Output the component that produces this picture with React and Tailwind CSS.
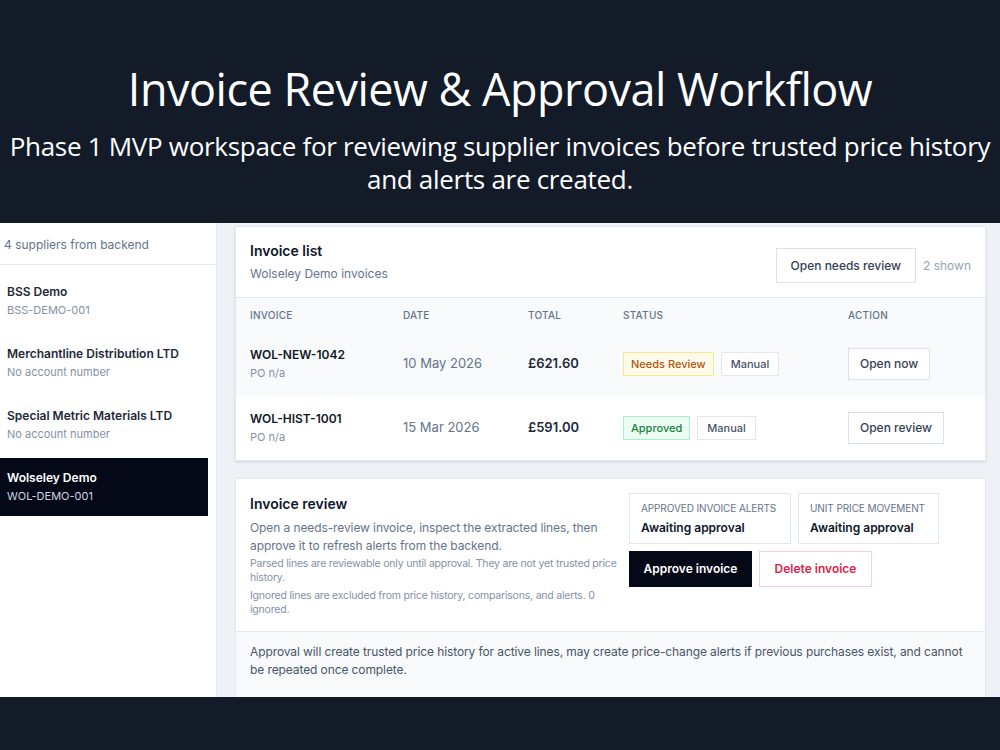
import React from 'react';

const suppliers = [
  { name: 'BSS Demo', account: 'BSS-DEMO-001' },
  { name: 'Merchantline Distribution LTD', account: 'No account number' },
  { name: 'Special Metric Materials LTD', account: 'No account number' },
  { name: 'Wolseley Demo', account: 'WOL-DEMO-001', active: true },
];

const invoices = [
  {
    id: 'WOL-NEW-1042',
    date: '10 May 2026',
    total: '£621.60',
    status: 'Needs Review',
    action: 'Open now',
    highlight: true,
  },
  {
    id: 'WOL-HIST-1001',
    date: '15 Mar 2026',
    total: '£591.00',
    status: 'Approved',
    action: 'Open review',
  },
];

const StatusBadge = ({ status }) =>
  status === 'Approved' ? (
    <span className="border border-[#a7f0c8] bg-[#ecfdf3] px-[7px] py-[3px] text-[11px] font-medium text-[#15803d]">
      Approved
    </span>
  ) : (
    <span className="border border-[#fde68a] bg-[#fffbeb] px-[7px] py-[3px] text-[11px] font-medium text-[#b45309]">
      Needs Review
    </span>
  );

const Sidebar = () => (
  <aside className="w-[217px] shrink-0 border-r border-[#e2e8f0] bg-white">
    <div className="border-b border-[#e2e8f0] px-[4px] pb-[10px] pt-[13px] text-[12px] text-[#64748b]">
      4 suppliers from backend
    </div>
    <div className="flex flex-col gap-[4px] pr-[8px] pt-[7px]">
      {suppliers.map((s) => (
        <div
          key={s.name}
          className={`h-[58px] pl-[7px] pt-[12px] ${s.active ? 'bg-[#050816] text-white' : 'text-[#1e293b]'}`}
        >
          <div className="text-[12px] font-semibold leading-[16px]">{s.name}</div>
          <div className={`text-[11px] leading-[20px] ${s.active ? 'text-[#cbd5e1]' : 'text-[#8391a7]'}`}>
            {s.account}
          </div>
        </div>
      ))}
    </div>
  </aside>
);

const InvoiceList = () => (
  <section className="border border-[#e2e8f0] bg-white shadow-sm">
    <div className="flex items-start justify-between px-[14px] pb-[14px] pt-[15px]">
      <div>
        <h2 className="text-[14px] font-semibold leading-[18px] text-[#0f172a]">Invoice list</h2>
        <p className="mt-[5px] text-[12px] text-[#64748b]">Wolseley Demo invoices</p>
      </div>
      <div className="mt-[6px] flex items-center gap-[7px]">
        <button className="h-[35px] border border-[#dbe2ec] bg-white px-[14px] text-[12px] font-medium text-[#334155]">
          Open needs review
        </button>
        <span className="text-[12px] text-[#94a3b8]">2 shown</span>
      </div>
    </div>
    <div className="grid grid-cols-[153px_125px_95px_225px_1fr] border-t border-[#e2e8f0] bg-[#f8fafc] px-[14px] pb-[9px] pt-[10px] text-[10px] font-medium uppercase tracking-wide text-[#64748b]">
      <span>Invoice</span>
      <span>Date</span>
      <span>Total</span>
      <span>Status</span>
      <span>Action</span>
    </div>
    {invoices.map((inv) => (
      <div
        key={inv.id}
        className={`grid h-[64px] grid-cols-[153px_125px_95px_225px_1fr] items-center px-[14px] ${inv.highlight ? 'bg-[#f8fafc]' : 'bg-white'}`}
      >
        <div>
          <div className="text-[12px] font-semibold leading-[16px] text-[#111827]">{inv.id}</div>
          <div className="mt-[2px] text-[11px] text-[#8391a7]">PO n/a</div>
        </div>
        <div className="text-[13px] text-[#64748b]">{inv.date}</div>
        <div className="text-[13px] font-semibold text-[#1e293b]">{inv.total}</div>
        <div className="flex items-center gap-[7px]">
          <StatusBadge status={inv.status} />
          <span className="border border-[#e2e8f0] bg-white px-[9px] py-[3px] text-[11px] font-medium text-[#475569]">
            Manual
          </span>
        </div>
        <div>
          <button className="h-[32px] border border-[#dbe2ec] bg-white px-[11px] text-[12px] font-medium text-[#334155]">
            {inv.action}
          </button>
        </div>
      </div>
    ))}
  </section>
);

const StatBox = ({ label, value, width }) => (
  <div className={`${width} border border-[#e2e8f0] px-[11px] pb-[8px] pt-[7px]`}>
    <div className="whitespace-nowrap text-[10px] uppercase leading-[14px] tracking-[-0.1px] text-[#64748b]">{label}</div>
    <div className="mt-[6px] whitespace-nowrap text-[12px] font-semibold leading-[14px] text-[#0f172a]">{value}</div>
  </div>
);

const InvoiceReview = () => (
  <section className="border border-[#e2e8f0] bg-white">
    <div className="flex justify-between px-[14px] pb-[14px] pt-[14px]">
      <div className="w-[372px]">
        <h2 className="mt-[2px] text-[14px] font-semibold leading-[18px] text-[#0f172a]">Invoice review</h2>
        <p className="mt-[6px] text-[12px] leading-[18px] tracking-[-0.1px] text-[#64748b]">
          Open a needs-review invoice, inspect the extracted lines, then approve it to refresh alerts from the backend.
        </p>
        <p className="mt-[2px] text-[10.5px] leading-[14px] tracking-[-0.2px] text-[#8391a7]">
          Parsed lines are reviewable only until approval. They are not yet trusted price history.
        </p>
        <p className="mt-[4px] text-[10.5px] leading-[14px] tracking-[-0.2px] text-[#8391a7]">
          Ignored lines are excluded from price history, comparisons, and alerts. 0 ignored.
        </p>
      </div>
      <div className="mr-[32px] flex flex-col gap-[7px]">
        <div className="flex gap-[7px]">
          <StatBox label="Approved invoice alerts" value="Awaiting approval" width="w-[162px]" />
          <StatBox label="Unit price movement" value="Awaiting approval" width="w-[141px]" />
        </div>
        <div className="flex gap-[7px]">
          <button className="h-[36px] w-[123px] bg-[#050816] text-[12px] font-semibold text-white">
            Approve invoice
          </button>
          <button className="h-[36px] w-[113px] border border-[#fecdd3] bg-white text-[12px] font-semibold text-[#e11d48]">
            Delete invoice
          </button>
        </div>
      </div>
    </div>
    <div className="border-t border-[#e2e8f0] bg-[#f8fafc] px-[14px] pb-[18px] pt-[11px] text-[12px] leading-[18px] tracking-[-0.1px] text-[#475569]">
      Approval will create trusted price history for active lines, may create price-change alerts if previous purchases exist, and cannot be repeated once complete.
    </div>
    <div className="h-[20px]" />
  </section>
);

export default function App() {
  return (
    <div className="flex h-[750px] w-[1000px] flex-col overflow-hidden bg-[#131a28] font-['Inter','Noto_Sans',sans-serif]">
      <header className="flex h-[223px] shrink-0 flex-col items-center text-center text-white">
        <h1 className="mt-[62px] font-['Open_Sans',sans-serif] text-[45px] font-normal leading-[54px] tracking-[-0.5px]">
          Invoice Review &amp; Approval Workflow
        </h1>
        <p className="mt-[14px] px-[4px] font-['Open_Sans',sans-serif] text-[26px] leading-[33px] tracking-[-0.3px]">
          Phase 1 MVP workspace for reviewing supplier invoices before trusted price history and alerts are created.
        </p>
      </header>
      <div className="flex h-[474px] shrink-0 overflow-hidden bg-[#eef2f7]">
        <Sidebar />
        <main className="flex flex-1 flex-col gap-[17px] pl-[18px] pr-[14px] pt-[3px]">
          <InvoiceList />
          <InvoiceReview />
        </main>
      </div>
    </div>
  );
}
